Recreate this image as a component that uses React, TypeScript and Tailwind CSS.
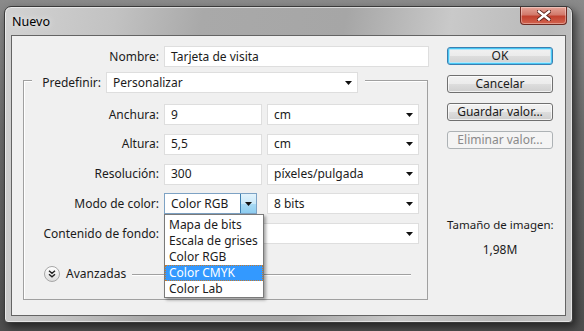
import React from "react";

// Photoshop "Nuevo" dialog, Win7 basic frame

function Arrow() {
  return (
    <svg width="7" height="4" viewBox="0 0 7 4" className="shrink-0">
      <path d="M0 0h7L3.5 4z" fill="#111" />
    </svg>
  );
}

function Field({ value, className = "" }: { value: string; className?: string }) {
  return (
    <div
      className={`h-[21px] bg-white border border-[#dedede] flex items-center pl-[6px] ${className}`}
    >
      {value}
    </div>
  );
}

function Select({ value, className = "" }: { value: string; className?: string }) {
  return (
    <div
      className={`h-[21px] bg-white border border-[#dedede] flex items-center justify-between pl-[6px] pr-[5px] ${className}`}
    >
      <span>{value}</span>
      <Arrow />
    </div>
  );
}

function Button({
  label,
  kind = "normal",
}: {
  label: string;
  kind?: "normal" | "default" | "disabled";
}) {
  const styles = {
    normal:
      "border-[#707070] text-[#1b1b1b] bg-[linear-gradient(#f2f2f2_0%,#ebebeb_50%,#dddddd_51%,#cfcfcf_100%)] shadow-[inset_0_0_0_1px_rgba(255,255,255,0.7)]",
    default:
      "border-[#3c7fb1] text-[#1b1b1b] bg-[linear-gradient(#f2f2f2_0%,#ebebeb_50%,#dddddd_51%,#d2d2d2_100%)] shadow-[inset_0_0_0_1px_#48c8f4,inset_0_0_0_2px_#b5e6fa]",
    disabled: "border-[#adb2b5] text-[#8a8a8a] bg-[#f4f4f4]",
  };
  return (
    <div
      className={`h-[18px] w-[106px] rounded-[3px] border flex items-center justify-center leading-none ${styles[kind]}`}
    >
      {label}
    </div>
  );
}

function Label({ text, className = "" }: { text: string; className?: string }) {
  return <div className={`text-right whitespace-nowrap ${className}`}>{text}</div>;
}

const MODES = ["Mapa de bits", "Escala de grises", "Color RGB", "Color CMYK", "Color Lab"];

export default function App() {
  return (
    <div className="w-[584px] h-[331px] overflow-hidden bg-[linear-gradient(180deg,#8a8a8a_0%,#6a6a6a_40%,#4e4e4e_100%)] pt-[6px] pl-[4px] font-['Noto_Sans',sans-serif] text-[12px] text-[#1b1b1b]">
      <div className="w-[569px] h-[317px] rounded-t-[7px] rounded-b-[4px] border border-[#3a3a3a] bg-[linear-gradient(100deg,#d2d2d2_0%,#c2c2c2_18%,#a9a9a9_32%,#a6a6a6_55%,#c9c9c9_72%,#b9b9b9_88%,#c6c6c6_100%)] shadow-[inset_0_0_0_1px_rgba(255,255,255,0.55),3px_4px_8px_rgba(0,0,0,0.55)] flex flex-col px-[6px] pb-[6px]">
        {/* title bar */}
        <div className="h-[28px] flex justify-between">
          <div className="pl-[1px] pt-[6px] text-[12.5px] text-black [text-shadow:0_0_6px_rgba(255,255,255,0.9)]">
            Nuevo
          </div>
          <div className="w-[47px] h-[18px] -mr-[1px] rounded-b-[4px] border border-t-0 border-[#6e2a22] bg-[linear-gradient(#e6a497_0%,#d27a6c_45%,#c2412f_55%,#d2634e_100%)] shadow-[inset_0_0_0_1px_rgba(255,255,255,0.35)] flex items-center justify-center">
            <svg width="14" height="11" viewBox="0 0 14 11">
              <path
                d="M2 1.5L12 9.5M12 1.5L2 9.5"
                stroke="#5a2019"
                strokeWidth="4.2"
                strokeLinecap="square"
              />
              <path
                d="M2 1.5L12 9.5M12 1.5L2 9.5"
                stroke="#fff"
                strokeWidth="2.4"
                strokeLinecap="square"
              />
            </svg>
          </div>
        </div>

        {/* client area */}
        <div className="flex-1 bg-[#f0f0f0] border border-[#646464] flex pl-[11px] pt-[10px]">
          {/* left column */}
          <div className="w-[406px] flex flex-col">
            <div className="flex items-center gap-[5px]">
              <Label text="Nombre:" className="w-[136px]" />
              <Field value="Tarjeta de visita" className="w-[265px]" />
            </div>

            {/* group box */}
            <div className="relative mt-[13px] w-[405px] border border-[#a0a0a0] shadow-[inset_1px_1px_0_#fff] pb-[17px]">
              <div className="-mt-[9px] ml-[8px] w-[333px] bg-[#f0f0f0] flex items-center gap-[5px]">
                <Label text="Predefinir:" className="w-[69px]" />
                <Select value="Personalizar" className="w-[252px]" />
              </div>

              <div className="mt-[11px] grid grid-cols-[135px_98px_152px] gap-x-[5px] gap-y-[8.75px] items-center">
                <Label text="Anchura:" />
                <Field value="9" />
                <Select value="cm" />

                <Label text="Altura:" />
                <Field value="5,5" />
                <Select value="cm" />

                <Label text="Resolución:" />
                <Field value="300" />
                <Select value="píxeles/pulgada" />

                <Label text="Modo de color:" />
                <div className="w-[93px] h-[21px] bg-white border border-[#7da2c4] flex items-center pl-[6px]">
                  <span className="flex-1">Color RGB</span>
                  <div className="w-[16px] h-full border-l border-[#3c7fb1] bg-[linear-gradient(#e3f3fc_0%,#c9e8f8_50%,#a9daf4_51%,#8ecdf0_100%)] flex items-center justify-center">
                    <Arrow />
                  </div>
                </div>
                <Select value="8 bits" />

                <Label text="Contenido de fondo:" />
                {/* value hidden under the open list */}
                <Select value="" className="col-span-2" />
              </div>

              <div className="mt-[22px] flex items-center h-[16px]">
                <div className="ml-[20px] w-[16px] h-[16px] rounded-full border border-[#a7a7a7] bg-[linear-gradient(#ffffff,#dcdcdc)] flex items-center justify-center">
                  <svg width="8" height="8" viewBox="0 0 8 8">
                    <path d="M1 0.8L4 3.3L7 0.8M1 4.3L4 6.8L7 4.3" stroke="#222" strokeWidth="1.4" fill="none" />
                  </svg>
                </div>
                <span className="ml-[6px]">Avanzadas</span>
                <div className="flex-1 ml-[6px] mr-[16px] h-px bg-[#a0a0a0] shadow-[0_1px_0_#fff]" />
              </div>

              {/* open dropdown list */}
              <div className="absolute left-[140px] top-[133px] w-[100px] h-[84px] bg-white border border-[#7a7a7a] shadow-[2px_2px_3px_rgba(0,0,0,0.35)] pt-[2px] z-10">
                {MODES.map((m) => (
                  <div
                    key={m}
                    className={`h-[16px] flex items-center pl-[4px] ${
                      m === "Color CMYK"
                        ? "bg-[#3399ff] text-white outline outline-1 outline-dotted outline-[#c87a2a] -outline-offset-1"
                        : ""
                    }`}
                  >
                    {m}
                  </div>
                ))}
              </div>
            </div>
          </div>

          {/* right column */}
          <div className="ml-[18px] w-[106px] flex flex-col">
            <div className="mt-[1px] flex flex-col gap-[10px]">
              <Button label="OK" kind="default" />
              <Button label="Cancelar" />
              <Button label="Guardar valor..." />
              <Button label="Eliminar valor..." kind="disabled" />
            </div>
            <div className="mt-[67px] text-center whitespace-nowrap text-[11.5px]">Tamaño de imagen:</div>
            <div className="mt-[8px] text-center">1,98M</div>
          </div>
        </div>
      </div>
    </div>
  );
}
